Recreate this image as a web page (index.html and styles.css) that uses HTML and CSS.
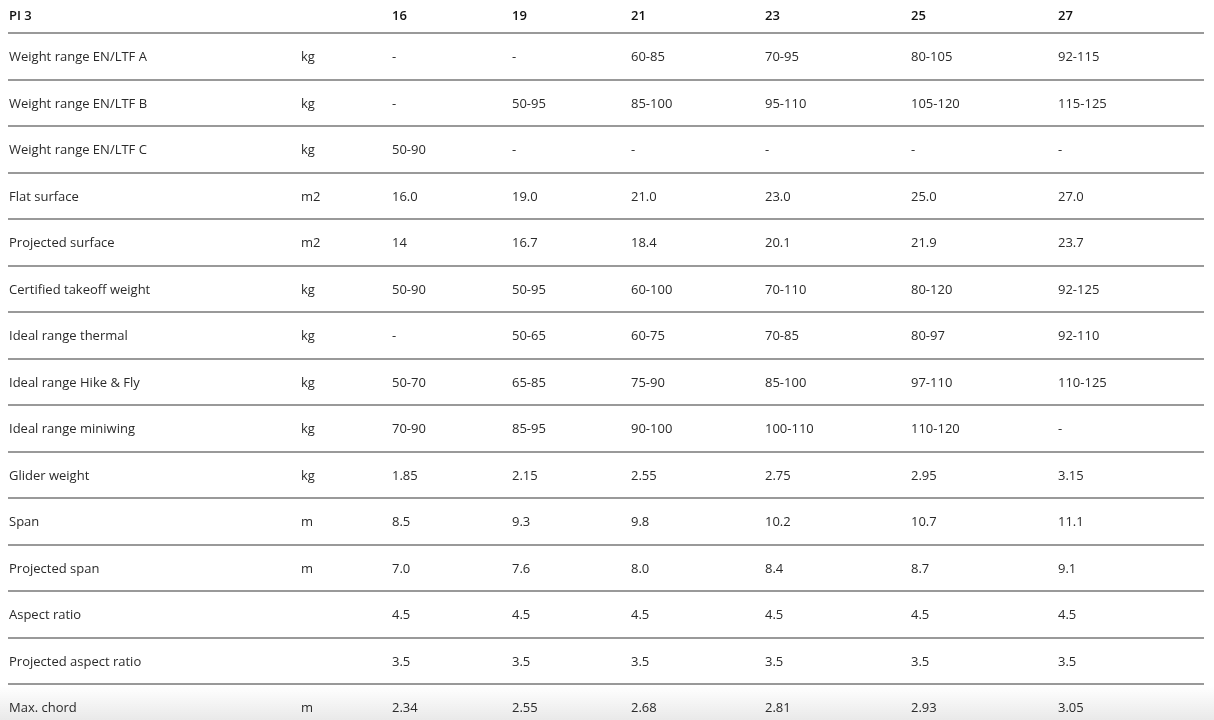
FILE: index.html
```html
<!DOCTYPE html>
<html lang="en">
<head>
<meta charset="utf-8">
<title>PI 3 specifications</title>
<link rel="stylesheet" href="styles.css">
</head>
<body>
<table class="specs">
  <colgroup>
    <col class="c-label"><col class="c-unit"><col class="c-v1"><col class="c-v2"><col class="c-v3"><col class="c-v4"><col class="c-v5"><col class="c-v6">
  </colgroup>
  <thead>
    <tr><th>PI 3</th><th></th><th>16</th><th>19</th><th>21</th><th>23</th><th>25</th><th>27</th></tr>
  </thead>
  <tbody>
    <tr><td>Weight range EN/LTF A</td><td>kg</td><td>-</td><td>-</td><td>60-85</td><td>70-95</td><td>80-105</td><td>92-115</td></tr>
    <tr><td>Weight range EN/LTF B</td><td>kg</td><td>-</td><td>50-95</td><td>85-100</td><td>95-110</td><td>105-120</td><td>115-125</td></tr>
    <tr><td>Weight range EN/LTF C</td><td>kg</td><td>50-90</td><td>-</td><td>-</td><td>-</td><td>-</td><td>-</td></tr>
    <tr><td>Flat surface</td><td>m2</td><td>16.0</td><td>19.0</td><td>21.0</td><td>23.0</td><td>25.0</td><td>27.0</td></tr>
    <tr><td>Projected surface</td><td>m2</td><td>14</td><td>16.7</td><td>18.4</td><td>20.1</td><td>21.9</td><td>23.7</td></tr>
    <tr><td>Certified takeoff weight</td><td>kg</td><td>50-90</td><td>50-95</td><td>60-100</td><td>70-110</td><td>80-120</td><td>92-125</td></tr>
    <tr><td>Ideal range thermal</td><td>kg</td><td>-</td><td>50-65</td><td>60-75</td><td>70-85</td><td>80-97</td><td>92-110</td></tr>
    <tr><td>Ideal range Hike &amp; Fly</td><td>kg</td><td>50-70</td><td>65-85</td><td>75-90</td><td>85-100</td><td>97-110</td><td>110-125</td></tr>
    <tr><td>Ideal range miniwing</td><td>kg</td><td>70-90</td><td>85-95</td><td>90-100</td><td>100-110</td><td>110-120</td><td>-</td></tr>
    <tr><td>Glider weight</td><td>kg</td><td>1.85</td><td>2.15</td><td>2.55</td><td>2.75</td><td>2.95</td><td>3.15</td></tr>
    <tr><td>Span</td><td>m</td><td>8.5</td><td>9.3</td><td>9.8</td><td>10.2</td><td>10.7</td><td>11.1</td></tr>
    <tr><td>Projected span</td><td>m</td><td>7.0</td><td>7.6</td><td>8.0</td><td>8.4</td><td>8.7</td><td>9.1</td></tr>
    <tr><td>Aspect ratio</td><td></td><td>4.5</td><td>4.5</td><td>4.5</td><td>4.5</td><td>4.5</td><td>4.5</td></tr>
    <tr><td>Projected aspect ratio</td><td></td><td>3.5</td><td>3.5</td><td>3.5</td><td>3.5</td><td>3.5</td><td>3.5</td></tr>
    <tr><td>Max. chord</td><td>m</td><td>2.34</td><td>2.55</td><td>2.68</td><td>2.81</td><td>2.93</td><td>3.05</td></tr>
  </tbody>
</table>
<div class="fade"></div>
</body>
</html>
```
FILE: styles.css
```css
html {
  background: #fff;
}
body {
  margin: 0;
  padding: 0 8px;
  font-family: "Open Sans", "Liberation Sans", sans-serif;
  font-size: 13px;
  color: #2a2a2a;
}
.specs {
  width: 1196px;
  border-collapse: collapse;
  table-layout: fixed;
}
.c-label { width: 293px; }
.c-unit { width: 91px; }
.c-v1 { width: 120px; }
.c-v2 { width: 119px; }
.c-v3 { width: 134px; }
.c-v4 { width: 146px; }
.c-v5 { width: 147px; }
.c-v6 { width: 146px; }
.specs th,
.specs td {
  text-align: left;
  padding: 0;
  white-space: nowrap;
}
.specs th:first-child,
.specs td:first-child {
  padding-left: 1px;
}
.specs th {
  height: 30px;
  padding-bottom: 2px;
  font-weight: 600;
  color: #111;
  border-bottom: 2px solid #999;
  vertical-align: middle;
}
.specs td {
  height: 44.5px;
  border-bottom: 2px solid #999;
  vertical-align: middle;
}
.fade {
  position: fixed;
  z-index: -1;
  left: 0;
  right: 0;
  bottom: 0;
  height: 34px;
  background: linear-gradient(to bottom, rgba(236,236,236,0), #e9e9e9);
  pointer-events: none;
}
```
